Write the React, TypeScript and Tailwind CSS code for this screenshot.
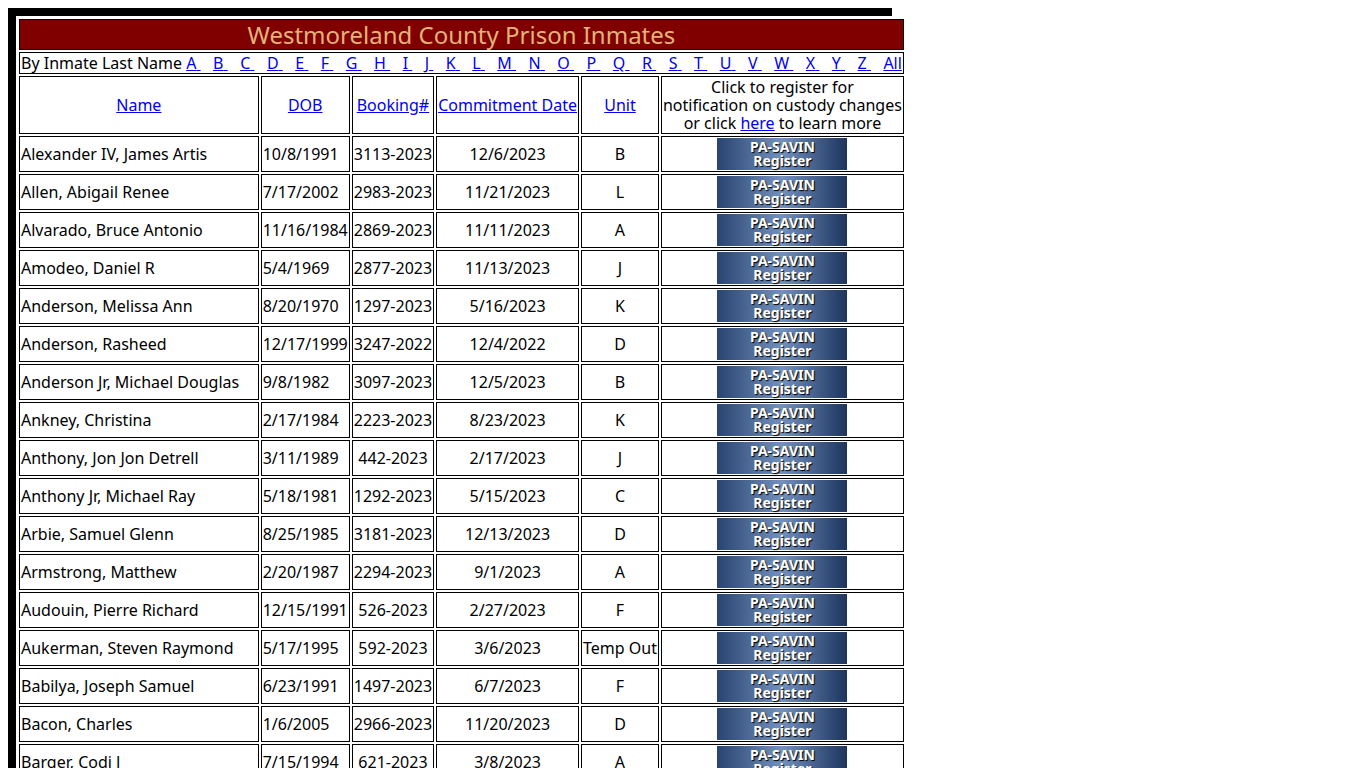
const rows: [string, string, string, string, string][] = [
  ["Alexander IV, James Artis", "10/8/1991", "3113-2023", "12/6/2023", "B"],
  ["Allen, Abigail Renee", "7/17/2002", "2983-2023", "11/21/2023", "L"],
  ["Alvarado, Bruce Antonio", "11/16/1984", "2869-2023", "11/11/2023", "A"],
  ["Amodeo, Daniel R", "5/4/1969", "2877-2023", "11/13/2023", "J"],
  ["Anderson, Melissa Ann", "8/20/1970", "1297-2023", "5/16/2023", "K"],
  ["Anderson, Rasheed", "12/17/1999", "3247-2022", "12/4/2022", "D"],
  ["Anderson Jr, Michael Douglas", "9/8/1982", "3097-2023", "12/5/2023", "B"],
  ["Ankney, Christina", "2/17/1984", "2223-2023", "8/23/2023", "K"],
  ["Anthony, Jon Jon Detrell", "3/11/1989", "442-2023", "2/17/2023", "J"],
  ["Anthony Jr, Michael Ray", "5/18/1981", "1292-2023", "5/15/2023", "C"],
  ["Arbie, Samuel Glenn", "8/25/1985", "3181-2023", "12/13/2023", "D"],
  ["Armstrong, Matthew", "2/20/1987", "2294-2023", "9/1/2023", "A"],
  ["Audouin, Pierre Richard", "12/15/1991", "526-2023", "2/27/2023", "F"],
  ["Aukerman, Steven Raymond", "5/17/1995", "592-2023", "3/6/2023", "Temp Out"],
  ["Babilya, Joseph Samuel", "6/23/1991", "1497-2023", "6/7/2023", "F"],
  ["Bacon, Charles", "1/6/2005", "2966-2023", "11/20/2023", "D"],
  ["Barger, Codi J", "7/15/1994", "621-2023", "3/8/2023", "A"],
];

const letters = "A B C D E F G H I J K L M N O P Q R S T U V W X Y Z".split(" ");

function Savin() {
  return (
    <div className="mx-auto w-[130px] h-[32px] bg-gradient-to-r from-[#2a4470] via-[#7391bf] to-[#1d355e] flex flex-col items-center justify-center leading-[14px] [font-family:'Liberation_Sans',Arial,sans-serif] font-bold text-[14px] text-white [text-shadow:1px_1px_1px_#000]">
      <span>PA-SAVIN</span>
      <span>Register</span>
    </div>
  );
}

export default function App() {
  const td = "border border-black px-[1px] py-0 whitespace-nowrap";
  const link = "text-[#0000ee] underline";
  return (
    <div className="p-2 [font-family:'Liberation_Serif','Times_New_Roman',serif] text-[16px] leading-[18px] text-black">
      <div className="bg-black p-[8px] w-[884px]">
        <table className="bg-white w-full border-separate border-spacing-[2px] p-[1px] [font-family:'Liberation_Serif',serif]">
          <tbody>
            <tr>
              <td colSpan={6} className="border border-black bg-[#800000] text-center text-[24px] text-[#e3b27a] h-[31px] leading-[29px]">
                Westmoreland County Prison Inmates
              </td>
            </tr>
            <tr>
              <td colSpan={6} className={`${td} h-[22px] leading-[20px]`}>
                By Inmate Last Name{" "}
                {letters.map((l) => (
                  <span key={l}>
                    <a className={link} href="#">{l}&nbsp;</a>&nbsp;&nbsp;&nbsp;
                  </span>
                ))}
                <a className={link} href="#">All</a>
              </td>
            </tr>
            <tr className="h-[58px] text-center">
              <td className={`${td} w-[269px]`}><a className={link} href="#">Name</a></td>
              <td className={`${td} w-[82px]`}><a className={link} href="#">DOB</a></td>
              <td className={`${td} w-[78px]`}><a className={link} href="#">Booking#</a></td>
              <td className={`${td} w-[131px]`}><a className={link} href="#">Commitment Date</a></td>
              <td className={`${td} w-[72px]`}><a className={link} href="#">Unit</a></td>
              <td className={td}>
                Click to register for<br />notification on custody changes<br />or click{" "}
                <a className={link} href="#">here</a> to learn more
              </td>
            </tr>
            {rows.map((r) => (
              <tr key={r[2]} className="h-[36px]">
                <td className={td}>{r[0]}</td>
                <td className={td}>{r[1]}</td>
                <td className={`${td} text-center`}>{r[2]}</td>
                <td className={`${td} text-center`}>{r[3]}</td>
                <td className={`${td} text-center`}>{r[4]}</td>
                <td className={td}><Savin /></td>
              </tr>
            ))}
          </tbody>
        </table>
      </div>
    </div>
  );
}
